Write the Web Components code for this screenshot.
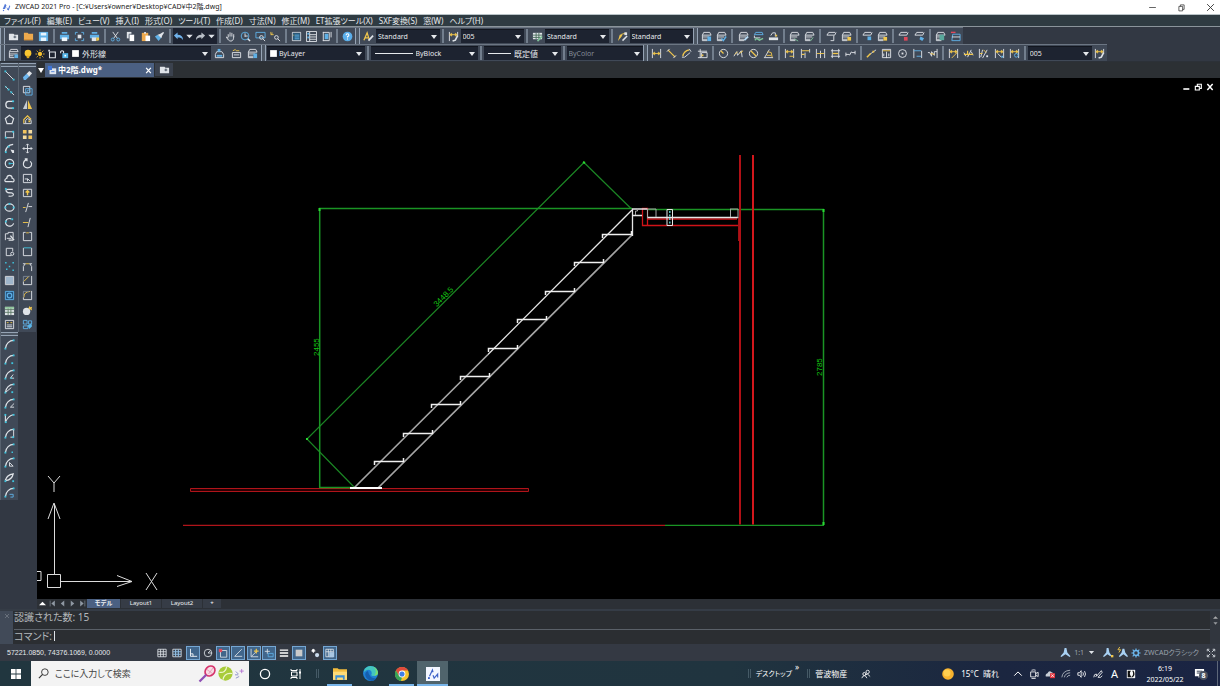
<!DOCTYPE html>
<html lang="ja">
<head>
<meta charset="utf-8">
<title>ZWCAD 2021 Pro</title>
<style>
html,body{margin:0;height:100%;background:#323843}
body{font-family:"Noto Sans","Noto Sans CJK JP",sans-serif;color:#e6e9ec}
</style>
</head>
<body>
<cad-app></cad-app>
<script>
const W='#dfe3e8',B='#5fb0e6',Y='#f0c64c',C='#3fc3dd',R='#e0485a',G='#7fc49a';
const p=(c,d,s=1)=>`<path d="${d}" fill="none" stroke="${c}" stroke-width="${s}"/>`;
const f=(c,d)=>`<path d="${d}" fill="${c}"/>`;
const o=(c,x,y,r,s=1)=>`<circle cx="${x}" cy="${y}" r="${r}" fill="none" stroke="${c}" stroke-width="${s}"/>`;
const dot=(c,x,y,r=1)=>f(c,`M${x-r} ${y-r}h${2*r}v${2*r}h${-2*r}z`);
const layer=p(W,'M3 1.500h6.500L11 4.500H1.500zM1.500 4.500v2H9M1.500 6.500v2.500H7M1.500 9v1.500H7');
const layerTop=p(W,'M3 1.500h7M3 1.500L1 4.500h8.500L11 1.500');
const dim=p(W,'M1.500 1v10M10.500 1v10')+p(Y,'M2 4h8M2 4l2-1.500v3zM10 4l-2-1.500v3z');
const arc=p(W,'M1.500 10.500C2 5 6 1.500 10.500 1.500',1.3)+dot(C,1.5,10.5)+dot(C,10.5,1.5);
const A=(x='')=>arc+x;
const I={
 logo:f('#5379d8','M1 8L4 1l2 2-2 5zM6 5l2 3 2-5 1 1-2 6-2-1z')+dot('#5379d8',2,10,.8),
 new:f(W,'M1 3h5l1 1h4v6H1z')+f('#4a5563','M6 6h1V5h1v1h1v1H8v1H7V7H6z'),
 open:f('#eda94d','M1 2h4l1 1h5v7H1z')+f('#d28c31','M1 9h10v1H1z'),
 save:f(B,'M1 1h10v10H1z')+f('#e8f4fd','M3 2h6v3H3zM3 7h6v4H3z'),
 print:f(B,'M1 4h10v5H1zM3 1h6v2H3z')+f('#f1f7fb','M3 7h6v4H3z'),
 preview:p(B,'M1.500 4V1.500H4M8 1.500h2.500V4M10.500 8v2.500H8M4 10.500H1.500V8')+f(W,'M4 4h4v4H4z'),
 plot:f(B,'M1 4h10v4H1zM3 1h6v2H3z')+f(W,'M3 7h5v4H3z')+f(Y,'M8 7h3v3l-3 1z'),
 cut:p(W,'M3 1l5 7M9 1L4 8')+o(B,3,9.3,1.600)+o(B,9,9.300,1.600),
 copy:f(W,'M2 1h5v7H2z')+f('#fff','M5 4h5v7H5z')+p('#5b6675','M4.500 8V3.500H8'),
 paste:f('#eda94d','M2 2h7v9H2z')+f('#fff','M6 5h5v6H6z')+dot(W,5.500,2),
 match:f(B,'M1 6l3-2 4 3-3 4z')+f(W,'M4 4l3-1 3-2 1 1-2 3-1 3z'),
 undo:f('#6fb1ea','M1 5l4-3.500V4c4 0 6 2 6 6-1.500-2.500-3-3-6-3v2z'),
 redo:f('#b9bfc7','M11 5L7 1.500V4C3 4 1 6 1 10c1.500-2.500 3-3 6-3v2z'),
 down:f(W,'M2.500 4h7L6 8z'),
 pan:f('#4d5866','M3 5h7v5H4z')+p(W,'M3.500 7V3.500M5.500 6V1.500M7.500 6V2M9.500 6.500V3.500M9.500 6c0 3-1 5-3 5S3 9.500 1.500 6.500L3.500 8'),
 zoomrt:o(B,5.500,5.500,4.200)+p(W,'M5.500 2.500v4M5.500 5.500h3')+p(W,'M8.500 8.500l2.500 2.500',1.600),
 zoomw:p(B,'M1 1.500h10v6H1z')+o(W,7,7,2)+p(W,'M8.500 8.500L11 11'),
 zoomp:p(Y,'M1 4l2-2M1 4h3M1 4V1')+o(W,7,7,2)+p(W,'M8.500 8.500L11 11'),
 props:p(W,'M1.500 1.500h9v9h-9z')+f('#2a5878','M2 2h8v8H2z')+p(B,'M4 4.500h5M4 6.500h5M4 8.500h5')+dot(Y,3,4.500,.5),
 palette:p(W,'M.5 .5h11v11H.5z')+p(W,'M4 1v10M4 4h7M4 6.500h7M4 9h7')+dot(B,2.500,3)+dot(B,2.500,7),
 design:p(W,'M2.500 1v10M2 1.500h7v9H2')+f(B,'M4 3h4v6H4z')+p(W,'M11 1v6'),
 help:`<circle cx="6" cy="6" r="5.300" fill="#5aaeea"/>`+p('#fff','M4.500 4.500Q4.500 3 6 3t1.500 1.500Q7.500 5.500 6 6v1.200M6 8.200v1.200',1.2),
 tstyle:p(Y,'M1 10L4.500 2 7 10M2.500 7.500h3.500',1.400)+p(W,'M6 10.500L11 5',1.800),
 dstyle:p(W,'M1.500 1v10M10.500 1v5')+p(Y,'M2 4h8M2 4l2-1.500v3zM10 4l-2-1.500v3z')+p(W,'M5 11l3-1 2.500-5',1.800),
 tbl:f(W,'M1 2h10v7H1z')+p('#496e5b','M1 4.500h10M1 7h10M4.500 2v7M7.500 2v7')+p(G,'M6 11l5-5',1.700),
 mstyle:f(Y,'M1 11L3 4h3l-1 2z')+p(Y,'M4 4l6-2')+dot(W,9.500,3,1.500)+p(W,'M6 10.500L11 5.500',1.600),
 layers:p(W,'M3 1.500h7l1 2.500H1.500zM1.500 4.500v6H7M1.500 6.500h9M1.500 8.500H6')+f(B,'M7 7h4v4H7z'),
 l1:layer+f(B,'M7 6h4v5H7z'), l2:layer+p(B,'M6 8l2 2.500L11 6',1.600), l3:layer+p('#b5d8f1','M7 10l4-4',2),
 l4:p(B,'M3 1.500h7L11 4H1.500z')+p(W,'M1.500 5v2.500H8')+p(G,'M2 10l2-2 3 2 4-2',1.500),
 l5:f(W,'M1 7h10v3H1z')+p(W,'M3 5l2-3h3v4')+dot(Y,9,5),
 l6:layer+p(G,'M6 8.500l4 2.500'), l7:layer+p(G,'M7 11l3-4'),
 l8:layerTop+p(W,'M8.500 5v5.500H5'), l9:layer+dot(Y,9,8.500,2), l10:layerTop+dot(B,8,8,2), l11:layerTop+dot(R,8.500,8.500,2),
 l12:layerTop+f(B,'M7 6l4 2-2 3-3-2z'), l13:layer+f('#5aa99d','M5 4h5v6H5z'), l14:p(B,'M3 3.500h8v7H2z')+p(R,'M1 1.500h5',1.500)+p(W,'M2 6.500h9'),
 m1:p(W,'M1.500 10.500h9V7l-2-3H3L1.500 7z')+p(B,'M3 8.500h6',2)+f(B,'M4 1h3v3H4z'),
 m2:p(W,'M1.500 10.500h9V5h-9zM3 7.500h6')+p(Y,'M2 3l3-1.500M5 3h4'),
 dlin:p(W,'M1.500 1v10M10.500 1v10')+p(Y,'M2 6h8M2 6l2-1.500v3zM10 6l-2-1.500v3z'), dali:p(Y,'M2 2l8 8',1.400)+p(W,'M1 4l3-3M8 11l3-3'),
 darc:p(Y,'M2 9Q3 3 9 2',1.500)+p(W,'M1 10h3M9 1l2 3M4 10l6-5'), dord:p(W,'M1 3.500h10M3.500 1v10M1 10.500h10V5H5v5')+dot(Y,6,8),
 drad:o(W,6,6,4.500)+p(Y,'M6 6L3 3',1.300), djog:p(W,'M1 9L4 4l1 4 4-5 1 7')+p(Y,'M2 7l3-3M7 6l4-3'),
 ddia:o(W,6,6,4.500)+p(Y,'M3 3l6 6',1.300), dang:p(W,'M1 10.500h10M2 10L7 1.500')+p(Y,'M5 4l4 1 1 5M4 8h5'),
 d1:dim+p(Y,'M6 9h5'), d2:p(W,'M1.500 1v10M5.500 5v6M10.500 1v4')+p(Y,'M2 3h8M2 7h3',1.300),
 d3:p(W,'M1.500 1v10M6 3v8M10.500 1v10')+p(Y,'M2 6h8'), d4:p(W,'M2.500 1v10M9.500 1v10M1 3h10M1 9h10')+p(Y,'M3 6h6',1.500),
 d5:p(W,'M1 7h4M7 5h4M1 5v4M11 3v4M5 8l2-4'),
 d6:p(W,'M4 7l7-5')+p(Y,'M1 10l4-4',1.600)+dot(Y,8,4), d7:p(W,'M1.500 1.500h9v9h-9zM6 4v7M3 6v3M8.500 6v3')+p(Y,'M2 3h8'),
 d8:o(W,6,6,4.300)+dot(W,6,6), d9:p(W,'M2 1v10M10.500 3v8')+p(B,'M2 3h8M5 9h5'),
 d10:p(W,'M1 5h2l2 4V4l3 4V4h3M11 1v10')+p(Y,'M4 6l4 1'),
 e1:dim+p(Y,'M4 11l6-6'), e2:p(W,'M1 5l2 4M5 10l4-8M9 4l2 4')+p(Y,'M1 7h10M5 3v5',1.300),
 e3:p(W,'M1.500 1v10M5 2l-2 8M10 2L5 11')+p(Y,'M6 2l3 3M2 6h3')+dot(W,10,9),
 e4:dim+p(W,'M4 6l4 4')+dot(B,9,9.500), e5:dim+o(B,8,8,2),
 line:p(W,'M1.500 1.500l9 9')+dot(C,1.500,1.500)+dot(C,10.500,10.500), xline:p(W,'M1 1l4 4M7 7l4 4')+dot(C,5,5)+dot(C,8,8)+dot(C,2,2,.7),
 pline:p(W,'M10 2.500H5Q2 2.500 2 6t3 4h5',1.400)+dot(C,10,10)+dot(C,10,2.500), poly:p(W,'M6 1.500l4.500 3.500-1.800 5.500H3.300L1.500 5z',1.300),
 rect:p(W,'M1.500 3h9v6.500h-9z')+dot(C,2,9.500)+dot(C,10,3), arc3:p(W,'M1.500 10C2 5 5 2 10 1.500',1.300)+f(W,'M7 7l4 1v3h-2z')+dot(C,2,10)+dot(C,5,4),
 circle:o(W,6,6,4.600,1.300)+p(C,'M6 6h4')+dot(C,6,6), cloud:p(W,'M3 9.500Q.500 9.500 1 7.500 1.500 6 3 6 3 2.500 6 2.500T9 6q2 0 2 2t-2 1.500z',1.300),
 spline:p(W,'M9.500 2.500H4Q1.500 3 2.500 4.800T8 6.500q3 .5 2 2.500-1 1.500-5 1',1.300)+dot(C,2,2), ellipse:`<ellipse cx="6" cy="6" rx="4.800" ry="4" fill="none" stroke="${W}" stroke-width="1.300"/>`+dot(C,6,2)+dot(C,1.500,6)+dot(C,10.500,6),
 earc:p(W,'M8 2A4.500 4.200 0 1 0 10.500 7',1.300)+dot(C,9,2.500)+dot(C,2,5), insert:p(W,'M1.500 10V3h3V1.500H10V8M3 8h5')+p(W,'M7 5l4 5M5 10h5',1.500),
 block:p(W,'M8 10.500H2.500v-8h7V6')+o(W,9,8.500,1.700), points:dot(C,2,2,.8)+dot(C,10,2,.8)+dot(C,6,6,.8)+dot(C,3,9,.8)+dot(C,10,10,.8),
 hatch:f('#9fb6cc','M2 2h8v8H2z')+p(W,'M1.500 1.500h9v9h-9z'), region:f('#24537d','M1 1h10v10H1z')+p(B,'M1.500 1.500h9v9h-9z')+o(B,6,6,2.500,1.300),
 table:f(W,'M1 2h10v9H1z')+p('#5f7b68','M1 5h10M1 8h10M4.500 3v8M7.500 3v8')+f('#8fc79c','M1 2h10v2H1z'), mtext:p(W,'M1.500 1.500h9v9h-9zM3 6.500h6M3 8.500h6')+p(Y,'M3 4h2M7 4h2'),
 erase:f(W,'M5 4l3-3 3 2.500-3.500 4z')+f('#6db6ee','M1 8l4-4 3 3-4 4H2z'), mcopy:p(W,'M1.500 1.500h7v7h-7z')+p(B,'M4 4h7v7H4z')+o(B,7,7,1.500),
 mirror:f('#c5ccd4','M5.500 1v10H1z')+f(Y,'M6.500 1v10H11z'), offset:p(Y,'M2 10V6l4-4 4 4',1.300)+p(W,'M4 10V7l2-2 4 2v3.500H1.500')+dot(Y,8,8),
 array:f('#f2c45e','M1 1h4v4H1zM7 7h4v4H7z')+f('#f5dca0','M7 1h4v4H7zM1 7h4v4H1z'), move:p(W,'M6 1v10M1 6h10M4.500 2.500L6 1l1.500 1.500M4.500 9.500L6 11l1.500-1.500M2.500 4.500L1 6l1.500 1.500M9.500 4.500L11 6 9.500 7.500'),
 rotate:p(W,'M5 1.500Q1.500 3 1.500 6.500T6 10.800q4.500-.3 4.500-4.800L9 3.500M3 1h2.500v2.500',1.200), scale:p(W,'M1.500 1.500h9v9h-9z')+p(W,'M3 6.500h3V9M6 6l3 3'),
 stretch:p(W,'M1.500 2.500h9v8h-9z')+p(Y,'M6 4v5M4 6l2-2 2 2',1.500), trim:p(W,'M7 1L4 11')+p(Y,'M1 6h3')+p(W,'M7 5h4'), extend:p(W,'M9 1L6.500 11')+p(Y,'M1 6h6'),
 brk1:p(W,'M4 1.500H1.500v9h9v-9H8')+p(Y,'M4.500 2h3'), brk2:p(W,'M1.500 2v8.500h9V2')+p(C,'M2 2h8'), join:p(W,'M1.500 11V6l2-3M10.500 11V6l-2-3M1 3h3M8 3h3')+p(Y,'M4 3h4'),
 chamfer:p(W,'M10.500 1v9.500h-9V7')+p(Y,'M2 7l6-6')+p('#7c8896','M1.500 7V1.500H8'), fillet:p(W,'M10.500 1v9.500h-9V8')+p(Y,'M2 8q0-6 7-6.500')+p('#7c8896','M1.500 7V1.500H8'),
 blast:`<circle cx="5" cy="7" r="4" fill="#dfe3e8"/>`+f(Y,'M8 1l1 1.500L11 2l-.5 2L11 6 9 5 7 4z'), bedit:p(B,'M1.500 1.500h4v4h-4zM7 2h3.500v3.500H7zM1.500 7.500h5v3h-5z')+f('#58b6ea','M6 7l4-2 1 3-3 3z'),
 a1:A(),a2:A(dot(C,9,10)),a3:A(p(W,'M10 6L7 10h4')+dot(C,8,10,.8)),a4:A(p(W,'M2 10l6-5')+dot(C,9,10)),a5:A(p(W,'M11 6L7 10h4')),
 a6:p(W,'M1.500 2v8.500M2 9q3-6 8-7',1.200)+dot(C,1.500,2)+dot(C,10.500,2)+dot(C,2,10),a7:A(p(W,'M10.500 2v8M7 10h4')+dot(C,10,10)),a8:A(dot(C,9,10,.8)),a9:A(p(W,'M6 6v4h4z')),
 a10:p(W,'M1.500 9Q3 3 10 2 9 8 2 9.500',1.400)+dot(C,1.500,10)+dot(C,10,10),a11:A(p(B,'M6 8h4v3H7')),
 bulb:`<circle cx="6" cy="5" r="4" fill="#f7c531"/>`+f('#d8a51f','M4.500 8h3v3h-3z'), sun:`<circle cx="6" cy="6" r="2.600" fill="#f4c02f"/>`+p('#f4c02f','M6 .500v2M6 9.500v2M.500 6h2M9.500 6h2M2 2l1.500 1.500M8.500 8.500L10 10M10 2L8.500 3.500M2 10l1.500-1.500'),
 freeze:p(W,'M3 3.500h7v7H3z',1.300)+dot(W,2.500,2), lock:f('#55b5e8','M4 5h7v6H4z')+p(W,'M2 5V3q1.500-2 3.500 0v2',1.300)+dot('#fff',7.500,8), swatch:f('#fff','M1.500 1.500h9v9h-9z'),
 doc:f('#dfe6ef','M3 4h8v7H3z')+f('#3f74d5','M1 1h5v5H1z')+p('#3f74d5','M5 8h4'),
 grid:p(W,'M1 1.500h10v9H1zM1 4.500h10M1 7.500h10M4.300 1.500v9M7.600 1.500v9'), grid2:p(W,'M1 1.500h10v9H1z')+p('#8dbbe0','M1 4.500h10M1 7.500h10M4.300 1.500v9M7.600 1.500v9',1.400),
 ortho:p('#fff','M3 1v9h8M3 7h3v3'), polar:o(W,6,6,4.500)+p(W,'M6 6h5M6 6l3-3'), osnap:p(W,'M3 3h7.500v8H3z')+f(R,'M1 1h4v4H1z'), otrack:p(W,'M10.500 1.500L2 10h9'),
 ducs:p(W,'M2.500 1v9.500H11M3 10l6-6')+f(Y,'M8 1h1.500v2h2v1.500h-2v2H8v-2H6V3h2z'), dyn:p(W,'M4 1v6M1 4h6')+p(B,'M5 6.500h6v4H5z'), lwt:p('#fff','M1 2.500h10M1 6h10M1 9.500h10',1.700),
 trans:f('#cacaca','M2 2h8v8H2z'), cycle:dot('#fff',4,3,1.500)+p('#fff','M4 1v5M1.500 3.500h5')+`<circle cx="8.500" cy="8.500" r="2.500" fill="#cbdced"/>`, model:p(W,'M1 1.500h9v9H1zM1 4.500h9M4 1.500v9M7 1.500v9')+f('#a9c7e3','M5 5h6v6H5z'),
 anno:f('#a9d1f3','M5 1h2l1 5 3.500 4-1 1L6 8l-4.500 3-1-1L4 6z'), anno2:f('#a9d1f3','M4 1h2l1 5 2 3-1 1-3-2-4 3-1-1 3.500-4z')+dot(Y,10,10,1.300), anno3:f('#a9d1f3','M6 2h2l1 4 3 4-1 1-4-3-4 3-1-1 3-4z')+p(Y,'M3 0L1 3h3L2 6'),
 gear:o('#6db8ee',6,6,3,1.700)+p('#6db8ee','M6 .500v2M6 9.500v2M.500 6h2M9.500 6h2M2 2l1.500 1.500M8.500 8.500L10 10M10 2L8.500 3.500M2 10l1.500-1.500',1.400),
 full:p(W,'M1.500 4V1.500H4M8 1.500h2.500V4M10.500 8v2.500H8M4 10.500H1.500V8M2 2l3 3M10 2L7 5M10 10L7 7M2 10l3-3'),
 win:f('#fff','M1 1h4.600v4.600H1zM6.400 1H11v4.600H6.400zM1 6.400h4.600V11H1zM6.400 6.400H11V11H6.400z'), search:o('#333',7.500,4.500,3.600)+p('#333','M5 7l-4 4',1.300),
 cortana:o('#fff',6,6,4.600,1.300), taskview:p('#fff','M1 1v1.500h6V1M1.500 4h5.500v4H1.500zM1 11V9.500h6V11M10 1v10')+dot('#fff',10,4.500),
 folder:f('#f4bd3e','M0 1h4l1 1h7v9H0z')+f('#ffdc78','M0 4h12v7H0z')+f('#3c8fd6','M2 7h8v4H8.500V9h-5v2H2z'),
 edge:`<circle cx="6" cy="6" r="6" fill="#1f80d3"/>`+f('#43c6c0','M1 3q2-3 5-3 5 0 6 5 0 3-4 3-2 0-1-2Q7 3 4 3 2 3 1 5z')+f('#165fae','M4 4q-3 1-2 4t5 4q2 0 3.500-2Q5 10 4 4z')+f('#77dd71','M8 .500q4 2 4 5 0 2-3 2.300 3-4-1-7.300z'),
 chrome:`<circle cx="6" cy="6" r="6" fill="#f4c430"/>`+f('#df4a3c','M.8 3A6 6 0 0 1 11.200 3H6L3.400 7.500z')+f('#37a257','M.8 3l2.600 4.500L6 9l-1 3A6 6 0 0 1 .8 3z')+`<circle cx="6" cy="6" r="2.900" fill="#fff"/><circle cx="6" cy="6" r="2.200" fill="#3f7fe8"/>`,
 zw:f('#f3f7ff','M0 0h12v12H0z')+p('#3d62c8','M3 8L5.500 2.500l.5 2M6 7l1 2.500L10 6v3',1)+dot('#3d62c8',2.500,9.500,.8),
 racket:`<ellipse cx="8" cy="4" rx="3.600" ry="3" transform="rotate(-45 8 4)" fill="#f7dce5" stroke="#d6336b" stroke-width="1.100"/>`+p('#8f4fb5','M5.500 6.500L1 11',1.500)+p('#e07aa0','M6 3l4 3M7 6l3-4',.4),
 ball:`<circle cx="6" cy="6" r="5.700" fill="#a8cc3a"/>`+p('#edf5cc','M1 5q5 1 6-4.500M4 11q1-6 7.500-5'),
 spark:p('#b06ad0','M8 0v5M5.500 2.500h5')+p('#7d82c4','M1 3l3 3M0 7h4M1 11l4-2'),
 people:o('#fff',8,3.500,2)+p('#fff','M5 7q3-2.500 6 2')+o('#fff',4,6,1.800)+p('#fff','M1 11q1-3 3-3t3 3'), chev:p('#fff','M1.500 8L6 3.500 10.500 8',1.200),
 weather:`<circle cx="6" cy="6" r="5.800" fill="#f8b32e"/><circle cx="5" cy="5" r="3.500" fill="#ffcf50"/>`,
 meet:p('#fff','M2 3.500h6v6H2zM8 5.500l3-1.500v5L8 7.500M3 1.500q3-1 5 0M3 11.500h5'), onedrive:f('#c8ced6','M1 9q-1-3 2-4 2-4 5-1 3 1 3 5z')+f('#e0343f','M6 5h6v6H6z')+p('#fff','M7.500 6.500l3 3M10.500 6.500l-3 3'),
 wifi:p('#b8bfc9','M1 10Q2 2 11 1.500M4 10q1-5 7-5.500M7 10q1-2.500 4-2.500'), vol:p('#fff','M1 4.500h2L5 2v8L3 7.500H1zM7 4q1.500 2 0 4M9 2.500q2.500 3.500 0 7'), pen:p('#fff','M1 10q0-4 3-4 2 1-1 3M4 9l6-7 1 2-5 6q4 1 5-2'),
 ime:f('#f7f7f7','M1 1h10v10H1z')+f('#111','M2 2h4Q3 5.500 6.500 9.500q3.500-3 1-7.500H9q3 5-1 8H2z'), notif:f('#fff','M1 1h10v8H7l-2 2V9H1z')+p('#283247','M3 3.500h6M3 5.500h6'),
 min:p('#333','M1.500 6h9'), max:p('#333','M2.500 4.500h5v6h-5zM4.500 4.500v-2h5v6h-2'), close:p('#333','M1.500 1.500l9 9M10.500 1.500l-9 9',1.200),
 wmin:p('#fff','M2 9h9',2.400), wmax:p('#fff','M2 5h6v5.500H2zM5 4V1.800h6V8H9',1.700), wclose:p('#fff','M2 1.500l8 9M10 1.500l-8 9',2.200),
 first:p('#8f98a3','M2 1v10')+f('#8f98a3','M10 1v10L4 6z'), prev:f('#8f98a3','M9 1v10L3 6z'), next:f('#8f98a3','M3 1v10l6-5z'), last:p('#8f98a3','M10 1v10')+f('#8f98a3','M2 1v10l6-5z'), up:f('#fff','M0 9h12L6 3z'), x:p('#7c848e','M3 3l6 6M9 3l-6 6')
};
const define=(name,html,setup)=>customElements.define(name,class extends HTMLElement{
  connectedCallback(){
    if(this.shadowRoot)return;
    const t=document.createElement('template');
    t.innerHTML=`<style>*{box-sizing:border-box}button,select,input{font:inherit;color:inherit;border:0;background:none;padding:0;margin:0;min-width:0}button{display:flex;align-items:center;justify-content:center}a{color:inherit;text-decoration:none}</style>`+(typeof html==='function'?html(this):html);
    this.attachShadow({mode:'open'}).append(t.content.cloneNode(true));
    if(setup)setup(this);
  }
});
const ic=(n,s)=>`<cad-icon name="${n}"${s?` size="${s}"`:''}></cad-icon>`;
const btn=(n,s,c='')=>`<button type="button" aria-label="${n}" class="${c}">${ic(n,s)}</button>`;

define('cad-icon',e=>{const s=e.getAttribute('size')||11;return `<style>:host{display:block;flex:none;width:${s}px;height:${s}px}svg{display:block;width:100%;height:100%}</style><svg viewBox="0 0 12 12" aria-hidden="true">${I[e.getAttribute('name')]||''}</svg>`});

/* icons="a b c": a run of tool buttons sharing the width evenly */
define('tool-group',e=>{const n=e.getAttribute('icons').split(' ');
 return `<style>:host{display:flex;flex:${n.length} 1 ${n.length*15}px;align-items:stretch}:host([vertical]){flex-direction:column;flex:1}button{flex:1 1 0}:host([sunken]){background:#1c2230}</style>${n.map(x=>btn(x)).join('')}`});

define('combo-box',`<style>:host{display:flex;align-items:center;background:#1d2330;border-top:1px solid #12161f;margin:1px 0;min-width:0;padding-left:2px;gap:1px}
select{appearance:none;flex:1;width:0;font-size:var(--fs,7px);line-height:12px;height:13px;outline:0}option{color:#111}:host([dim]) select{color:#858d98}
::slotted(hr){width:var(--line,38px);border:0;border-top:1px solid #e6e9ec;margin:0 2px}i{width:0;border:3px solid transparent;border-top:4px solid #e6e9ec;border-bottom:0;margin-right:3px;pointer-events:none}</style>
<slot></slot><select></select><i></i>`,e=>{const s=e.shadowRoot.querySelector('select');s.add(new Option(e.getAttribute('value')));s.setAttribute('aria-label',e.getAttribute('label'))});

define('tool-bar',`<style>:host{display:flex;align-items:stretch;background:#404957;border-top:1px solid #6c7683;height:17px}
:host([vertical]){flex-direction:column;height:auto;border-top:0;border-left:1px solid #58626f}
.grip{flex:none;width:5px;border:solid #95a3b4;border-width:0 1px;margin-right:1px;margin-left:0;background:#4c5663}
:host([vertical]) .grip{width:auto;height:4px;border-width:1px 0;margin:0 0 1px}
::slotted(hr){flex:none;width:2px;border:0;margin:1px 2px;background:#727e8d}</style><span class="grip"></span><slot></slot>`);

define('title-bar',`<style>:host{display:flex;align-items:center;height:14px;background:#fff;color:#222;font-size:7px;line-height:14px;padding:0 5px 0 2px}h1{font:inherit;margin:0 auto 0 4px;white-space:nowrap}nav{display:flex;gap:20px}</style>
${ic('logo',9)}<h1>ZWCAD 2021 Pro - [C:¥Users¥owner¥Desktop¥CAD¥中2階.dwg]</h1><nav>${btn('min',9)}${btn('max',9)}${btn('close',9)}</nav>`);

define('menu-bar',`<style>:host{display:flex;height:13px;background:#2f3b42;border-top:1px solid #b9c3c7;border-bottom:1px solid #8b949b;padding-left:4px;gap:6px;font-size:8px;line-height:11px;font-feature-settings:"palt"}button{white-space:nowrap}</style>
${['ファイル(F)','編集(E)','ビュー(V)','挿入(I)','形式(O)','ツール(T)','作成(D)','寸法(N)','修正(M)','ET拡張ツール(X)','SXF変換(S)','窓(W)','ヘルプ(H)'].map(t=>`<button type="button">${t}</button>`).join('')}`);

define('tool-rows',`<style>:host{display:block;background:#323843;border-bottom:1px solid #2c3138}.r{display:flex}
.a{flex:0 0 355px}.b{flex:0 0 338px}.c{flex:0 0 270px}.d{flex:0 0 261px}.e{flex:0 0 382px}.f{flex:0 0 464px}
combo-box{flex:1 1 0}.fix{flex:0 0 15px}.m{flex:1 1 97px}.n{flex:1 1 107px}.o{flex:1 1 76px}.s{flex:0 0 64px}.y{flex:0 0 190px;gap:2px;--fs:8px}</style>
<div class="r"><tool-bar class="a"><tool-group icons="new open save"></tool-group><hr><tool-group icons="print preview plot"></tool-group><hr><tool-group icons="cut copy paste match"></tool-group><hr><tool-group sunken style="flex:0 0 37px" icons="undo down redo down"></tool-group><hr><tool-group icons="pan zoomrt zoomw zoomp"></tool-group><hr><tool-group icons="props palette design"></tool-group><hr><tool-group icons="help"></tool-group></tool-bar>
<tool-bar class="b"><tool-group class="fix" icons="tstyle"></tool-group><combo-box value="Standard" label="文字スタイル"></combo-box><hr><tool-group class="fix" icons="dstyle"></tool-group><combo-box value="005" label="寸法スタイル"></combo-box><hr><tool-group class="fix" icons="tbl"></tool-group><combo-box value="Standard" label="表スタイル"></combo-box><hr><tool-group class="fix" icons="mstyle"></tool-group><combo-box value="Standard" label="引出線スタイル"></combo-box></tool-bar>
<tool-bar class="c"><tool-group icons="l1 l2"></tool-group><hr><tool-group icons="l3 l4 l5"></tool-group><hr><tool-group icons="l6 l7"></tool-group><hr><tool-group icons="l8 l9"></tool-group><hr><tool-group icons="l10 l9"></tool-group><hr><tool-group icons="l11 l12"></tool-group><hr><tool-group icons="l13 l14"></tool-group></tool-bar></div>
<div class="r"><tool-bar class="d"><tool-group class="fix" icons="layers"></tool-group><combo-box class="y" value="外形線" label="画層">${ic('bulb',10)}${ic('sun',10)}${ic('freeze',10)}${ic('lock',10)}${ic('swatch',9)}</combo-box><tool-group icons="m1 m2 l1"></tool-group></tool-bar>
<tool-bar class="e"><combo-box class="m" value="ByLayer" label="色">${ic('swatch',9)}</combo-box><hr><combo-box class="n" value="ByBlock" label="線種"><hr></combo-box><hr><combo-box class="o" value="既定値" label="線の太さ" style="--line:23px;--fs:8px"><hr></combo-box><hr><combo-box class="o" dim value="ByColor" label="印刷スタイル"></combo-box></tool-bar>
<tool-bar class="f"><tool-group icons="dlin dali darc dord"></tool-group><hr><tool-group icons="drad djog ddia dang"></tool-group><hr><tool-group icons="d1 d2 d3 d4 d5"></tool-group><hr><tool-group icons="d6 d7 d8 d9 d10"></tool-group><hr><tool-group icons="e1 e2 e3 e4 e5"></tool-group><hr><combo-box class="s" value="005" label="現在の寸法"></combo-box><tool-group icons="dstyle"></tool-group></tool-bar></div>`);

define('side-docks',`<style>:host{display:flex;align-items:flex-start;width:37px;background:#323843;padding-top:1px}div{width:18px}.t{height:269px}.u{height:168px}</style>
<div><tool-bar vertical class="t"><tool-group vertical icons="line xline pline poly rect arc3 circle cloud spline ellipse earc insert block points hatch region table mtext"></tool-group></tool-bar><tool-bar vertical class="u"><tool-group vertical icons="a1 a2 a3 a4 a5 a6 a7 a8 a9 a10 a11"></tool-group></tool-bar></div>
<div><tool-bar vertical class="t"><tool-group vertical icons="erase mcopy mirror offset array move rotate scale stretch trim extend brk1 brk2 join chamfer fillet blast bedit"></tool-group></tool-bar></div>`);

define('file-tabs',`<style>:host{display:flex;height:16px;background:#2c3034;font-size:8px;line-height:14px}.n{width:8px}.tab{display:flex;align-items:center;width:109px;height:14px;margin-top:1px;padding:0 2px;background:#4b6082;font-weight:700;gap:1px;font-feature-settings:"palt"}.tab a{margin-right:auto;color:#fff}.new{width:18px;height:13px;margin:1px 0 0 1px;background:#3b424e}i{border:3px solid transparent;border-top:5px solid #fff;border-bottom:0}</style>
<button type="button" class="n" aria-label="一覧"><i></i></button><div class="tab">${ic('doc',10)}<a href="#doc">中2階.dwg*</a>${btn('wclose',7)}</div>${btn('new',11,'new')}`);

const steps=Array.from({length:9},(_,i)=>{const x=Math.round(374+28.5*i),y=Math.round(461-28.375*i);return `M${x}.500 ${y+4}v-3.500h29v-3.500`}).join('');
define('drawing-canvas',`<style>:host{display:block;position:relative;background:#000;min-height:0;overflow:hidden}svg{display:block;width:100%;height:100%}nav{position:absolute;top:5px;right:6px;display:flex;gap:4px}text{font-family:"Liberation Sans",sans-serif;font-size:8px;fill:#12c412}</style>
<svg viewBox="37 78 1183 521" role="img" aria-label="階段の図面" fill="none">
<g stroke="#b0141a"><path d="M190.500 488.500h338v3h-338z" fill="#2b0003"/><path d="M183 525.400h482" stroke-width="1.300"/></g>
<path d="M584 162.500L307 439l47 48M584 162.500l47 46" stroke="#1b8524" stroke-width="1.200"/>
<g stroke="#1a9424"><path d="M319 208.500h313M665 525.400h159M824 209.500H648M319 487.500h33" stroke-width="1.300"/><path d="M823.500 209v316M319.700 208v280" stroke-width="1.500"/></g>
<path d="M319.500 208v3M823.500 209v3M823.500 522v3M583 162l2 1M306 439h2" stroke="#28d832" stroke-width="2"/>
<g stroke="#c4141a"><path d="M740 155v369.500" stroke="#b01016" stroke-width="2"/><path d="M753 155v369.500" stroke="#d3171c" stroke-width="2"/><path d="M738.500 217v24" stroke="#a01014"/><path d="M642.500 208.500h5v17h-5zM647 225.500h91M648 219h89" stroke="#d01318" stroke-width="1.300"/></g>
<path d="M354 488l134-133.500M378 488l254-253" stroke="#a4a4a4" stroke-width="1.700"/>
<path d="M488 354.500L632 210" stroke="#e8e8e8" stroke-width="1.300"/>
<path d="${steps}" stroke="#f0f0f0" stroke-width="1.500"/>
<path d="M350 488h32" stroke="#fff" stroke-width="2"/>
<g stroke="#e6e6e6"><path d="M632.500 236v-27h15M633 215.500h9M647 217.500h91" stroke-width="1.300"/><path d="M635.500 215v-4h2v-3M647.500 209v9M738 209v9M730.500 209v8M656 209v8M648 209h8M730 209h8" stroke="#a8a8a8"/><path d="M667 209.500h5.500v16H667zM667 217.500h5"/><path d="M669.800 211v14" stroke="#54c9c9" stroke-width="1.500" stroke-dasharray="2 1.500"/></g>
<g stroke="#dcdcdc"><path d="M47.500 574.500h13v13h-13zM54.500 574v-70M48 519l6-16 6 16M61 581.500h71M117 575.500l15 6-15 5M48 476l6 7v9M60 476l-6 7M146 573l11 17M157 573l-11 17M37 571.500h4v9h-4"/></g>
<text transform="rotate(-90 319 356)" x="319" y="356">2455</text><text transform="rotate(-45 436 308)" x="437" y="308">3448.5</text><text transform="rotate(-90 822 376)" x="822" y="376">2785</text>
</svg><nav>${btn('wmin',8)}${btn('wmax',8)}${btn('wclose',8)}</nav>`);

define('layout-tabs',`<style>:host{display:flex;height:10px;background:#2c3036;padding-bottom:1px;font-size:6px;line-height:9px}button.s{width:10px}a{text-align:center;background:#363c46;margin-right:1px;color:#eef0f2}.on{background:#4b6082;font-weight:700;width:33px}.l{width:40px}.p{width:18px;font-weight:700}</style>
${['up','first','prev','next','last'].map(n=>btn(n,7,'s')).join('')}<a class="on" href="#model">モデル</a><a class="l" href="#l1">Layout1</a><a class="l" href="#l2">Layout2</a><a class="p" href="#new">+</a>`);

define('command-panel',`<style>:host{display:flex;height:35px;background:#2b2e32;border-top:2px solid #353c46;color:#b4b8bc;font-size:10px;line-height:13px;font-feature-settings:"palt"}.x{width:13px;background:#414a58;align-items:flex-start;padding-top:1px}.main{flex:1;padding-left:1px}output{display:block;height:19px;border-bottom:1px solid #5a6068}label{display:flex;gap:2px}input{flex:1;height:13px;outline:0}.caret{width:1px;height:10px;margin-top:1px;background:#dfe3e8}.sb{display:flex;flex-direction:column;width:10px;background:#363c46;padding:4px 0;opacity:.6}</style>
${btn('x',8,'x')}<div class="main"><output>認識された数: 15</output><label>コマンド:<span class="caret"></span><input aria-label="コマンド"></label></div><div class="sb">${btn('up',5)}${btn('down',7)}</div>`);

define('status-bar',`<style>:host{display:flex;align-items:center;height:17px;background:#343943;padding:0 4px 0 7px;font-size:7px;line-height:13px}output{width:148px;font-family:"Liberation Sans",sans-serif}.g{display:flex;justify-content:space-between;width:182px;margin-right:auto}.g button{width:14px;height:14px;border:1px solid transparent}.g .on{background:#41668b;border-color:#75a7d3}.e{display:flex;align-items:center;gap:3px;color:#9ba3ad;font-feature-settings:"palt"}.k{margin-right:4px}.z{margin-right:4px}</style>
<output>57221.0850, 74376.1069, 0.0000</output><div class="g">${['grid','grid2','ortho*','polar','osnap*','otrack*','ducs*','dyn*','lwt','trans*','cycle','model*'].map(n=>{const a=n.endsWith('*');return btn(n.replace('*',''),10,a?'on':'')}).join('')}</div>
<div class="e">${btn('anno')}<span>1:1</span>${btn('down',9,'k')}${btn('anno2')}${btn('anno3')}${btn('gear',10)}<span class="z">ZWCADクラシック</span>${btn('full',10)}</div>`);

define('task-bar',`<style>:host{display:flex;align-items:stretch;height:25px;background:linear-gradient(90deg,#21363f,#20343f 60%,#1b2640 82%,#1a2443);font-size:8px;line-height:12px;color:#fff;font-feature-settings:"palt"}
.start{width:31px}.search{display:flex;align-items:center;width:218px;background:#f3f3f3;padding:0 4px 0 7px;gap:2px;color:#333}.search input{flex:1;font-size:9px;height:18px;padding-left:4px}.search input::placeholder{color:#444;opacity:1}
.app{width:31px}.run{border-bottom:2px solid #78b5ea;width:25px;margin:0 3px;padding-top:2px}.act{background:#50646c;border-bottom:2px solid #78b5ea;padding-top:2px}.bar{align-self:stretch;width:3px;margin:8px 5px;border:solid #455a66;border-width:0 1px}
.right{display:flex;align-items:center;margin-left:auto;white-space:nowrap}.p{margin-left:14px}.w{display:flex;align-items:center;gap:7px;margin-right:14px;margin-left:71px}.tray{display:flex;align-items:center;gap:6px}.tray .A{font-size:11px;padding:0 2px}time{text-align:center;font-size:7px;line-height:11px;width:58px}.q{align-self:flex-start;margin:0 3px}.nt{position:relative;margin-right:12px}.nt b{position:absolute;left:5px;top:3px;width:9px;height:9px;border-radius:5px;background:#4b5260;font-size:7px;line-height:9px;text-align:center}.end{align-self:stretch;border-left:1px solid #5d6779;width:3px}.d{font-size:7px}</style>
${btn('win',12,'start')}<label class="search">${ic('search',11)}<input type="search" aria-label="検索" placeholder="ここに入力して検索">${ic('racket',18)}${ic('ball',15)}${ic('spark',10)}</label>
${btn('cortana',12,'app')}${btn('taskview',12,'app')}<span class="bar"></span>${btn('folder',14,'run')}${btn('edge',15,'app')}${btn('chrome',14,'run')}${btn('zw',14,'app act')}
<div class="right"><span class="bar"></span><span class="d">デスクトップ</span><span class="q">»</span><span class="bar"></span><span>菅波物産</span><span class="p">${ic('people',10)}</span>
<div class="w">${ic('weather',12)}<span>15°C&nbsp; 晴れ</span></div><div class="tray">${['chev','meet','onedrive','wifi','vol','pen'].map(n=>btn(n,10)).join('')}<span class="A">A</span>${btn('ime',10)}</div><time>6:19<br>2022/05/22</time><div class="nt">${ic('notif',11)}<b>8</b></div><span class="end"></span></div>`);

define('cad-app',`<style>:host{display:flex;flex-direction:column;height:100vh;overflow:hidden}.work{flex:1;display:flex;min-height:0}.view{flex:1;display:flex;flex-direction:column;min-width:0}drawing-canvas{flex:1}</style>
<title-bar></title-bar><menu-bar></menu-bar><tool-rows></tool-rows><div class="work"><side-docks></side-docks><div class="view"><file-tabs></file-tabs><drawing-canvas></drawing-canvas><layout-tabs></layout-tabs></div></div><command-panel></command-panel><status-bar></status-bar><task-bar></task-bar>`);
</script>
</body>
</html>
